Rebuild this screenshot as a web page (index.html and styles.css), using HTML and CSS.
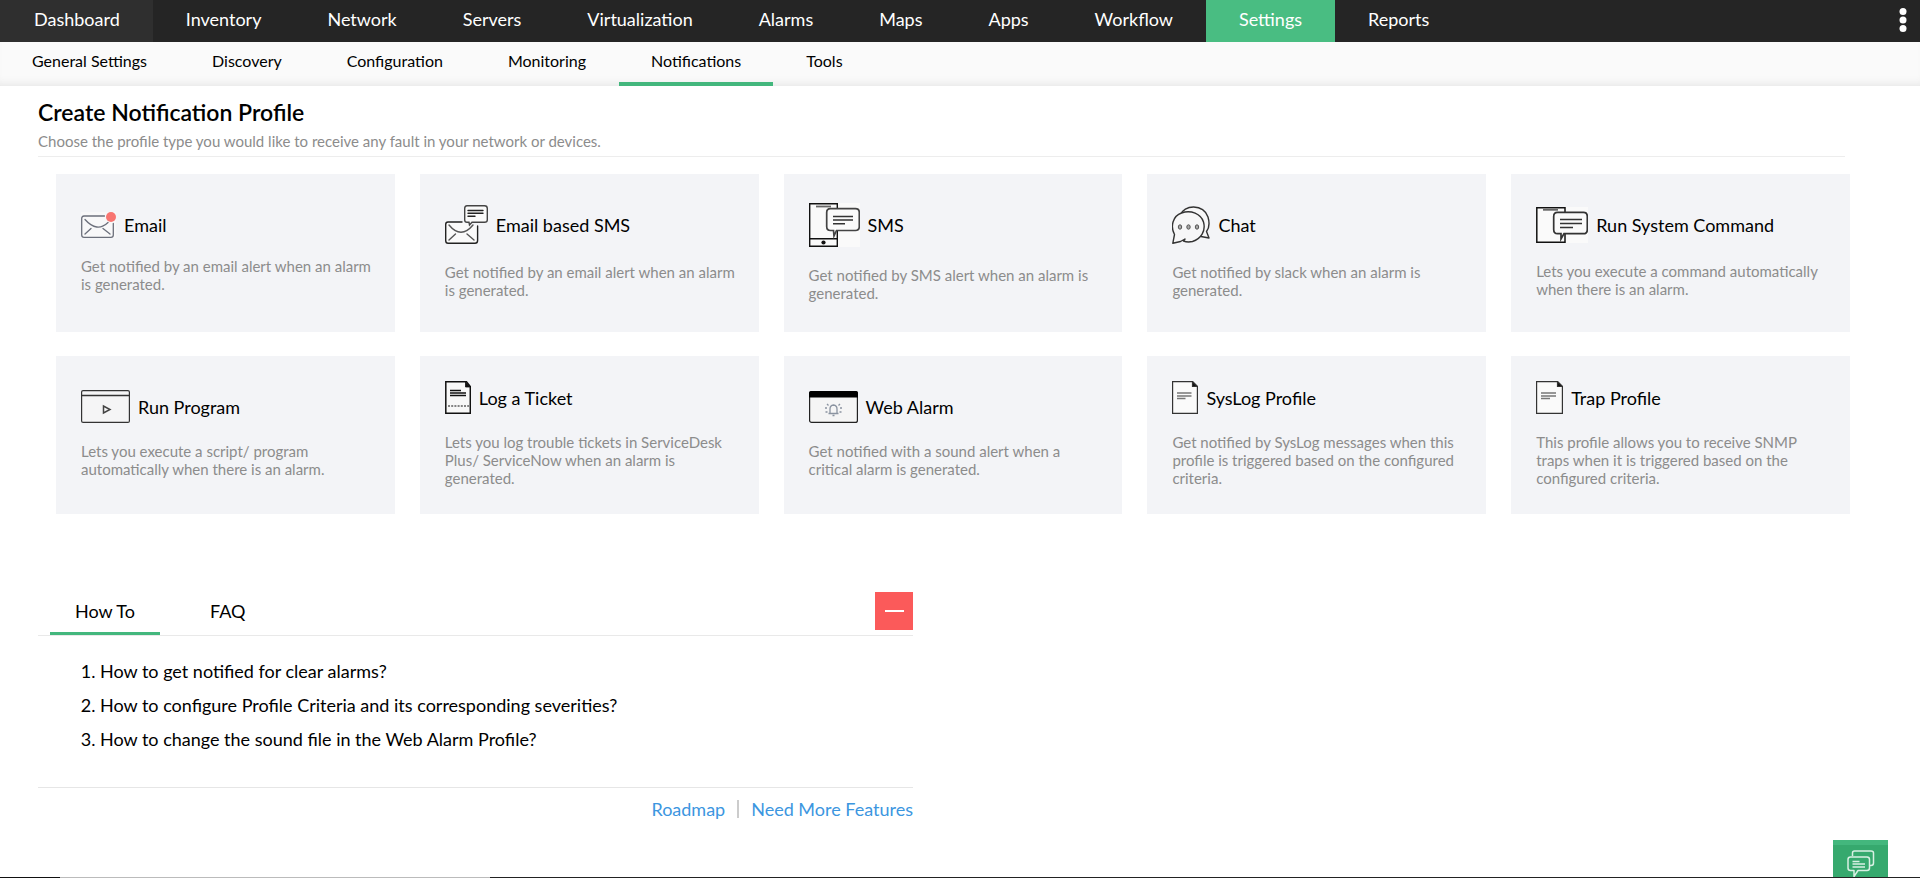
FILE: index.html
```html
<!DOCTYPE html>
<html lang="en">
<head>
<meta charset="utf-8">
<title>Create Notification Profile</title>
<link rel="stylesheet" href="styles.css">
</head>
<body>
<nav class="topnav" aria-label="Main">
  <a class="topnav-item is-home" href="#">Dashboard</a>
  <a class="topnav-item" href="#">Inventory</a>
  <a class="topnav-item" href="#">Network</a>
  <a class="topnav-item" href="#">Servers</a>
  <a class="topnav-item" href="#">Virtualization</a>
  <a class="topnav-item" href="#">Alarms</a>
  <a class="topnav-item" href="#">Maps</a>
  <a class="topnav-item" href="#">Apps</a>
  <a class="topnav-item" href="#">Workflow</a>
  <a class="topnav-item is-active" href="#">Settings</a>
  <a class="topnav-item" href="#">Reports</a>
  <button class="more" type="button" aria-label="More">
    <svg width="8" height="26" viewBox="0 0 8 26" fill="#fff"><circle cx="4" cy="4.500" r="3.500"/><circle cx="4" cy="13" r="3.500"/><circle cx="4" cy="21.500" r="3.500"/></svg>
  </button>
</nav>
<nav class="subnav" aria-label="Settings">
  <a class="subnav-item" href="#">General Settings</a>
  <a class="subnav-item" href="#">Discovery</a>
  <a class="subnav-item" href="#">Configuration</a>
  <a class="subnav-item" href="#">Monitoring</a>
  <a class="subnav-item is-active" href="#">Notifications</a>
  <a class="subnav-item" href="#">Tools</a>
</nav>

<main class="page">
  <header class="page-head">
    <h1 class="page-title">Create Notification Profile</h1>
    <p class="page-note">Choose the profile type you would like to receive any fault in your network or devices.</p>
  </header>

  <section class="cards">
    <a class="card" href="#">
      <span class="card-head">
        <svg width="35" height="26" viewBox="0 0 35 26" fill="none" stroke="#6b6f7b" stroke-width="1.300" stroke-linecap="round"><path d="M0 0H35V26H0Z" fill="#f8f8f9" stroke="none"/><path d="M23.500 4H3Q.7 4 .7 6.500V23Q.7 25.300 3 25.300H30Q32.300 25.300 32.300 23V11.500M4 7.500Q16 21 27 10.500M4 22L10 16.500M29 22L22 16.500"/><circle cx="30" cy="5" r="5" fill="#f87571" stroke="none"/></svg>
        <span class="card-title">Email</span>
      </span>
      <span class="card-text">Get notified by an email alert when an alarm is generated.</span>
    </a>
    <a class="card" href="#">
      <span class="card-head">
        <svg width="43" height="39" viewBox="0 0 43 39" fill="none" stroke="#222" stroke-width="1.400" stroke-linecap="round"><path d="M17 17H3Q.7 17 .7 19.500V35.500Q.7 38.300 3 38.300H30Q32.600 38.300 32.600 35.500V21" fill="#fafafa"/><path d="M4 20Q16 34.500 28 20M4 35L10.500 29M29 35L22 29" stroke="#555"/><path d="M22 .8H39.500Q42.300.8 42.300 3.500V15Q42.300 17.300 39.500 17.300H27L24.500 20 24 17.300H22Q19.700 17.300 19.700 15V3.500Q19.700.8 22 .8Z" fill="#fafafa" stroke="#444"/><path d="M23 5.500H38M23 8.300H38M23 11.200H30"/></svg>
        <span class="card-title">Email based SMS</span>
      </span>
      <span class="card-text">Get notified by an email alert when an alarm is generated.</span>
    </a>
    <a class="card" href="#">
      <span class="card-head">
        <svg width="51" height="44" viewBox="0 0 51 44" fill="none" stroke="#111" stroke-width="1.400"><path d="M0 0H51V44H0Z" fill="#fafafa" stroke="none"/><path d="M.7.7H28.300V43.300H.7ZM.7 35.700H28.300"/><path d="M7 3.500H22" stroke="#666" stroke-width="1.800"/><circle cx="14.500" cy="39.500" r="2.100" fill="#111" stroke="none"/><path d="M21.500 5.700H46.500Q50.300 5.700 50.300 9.500V23.500Q50.300 27.500 46.500 27.500H27.500L25 33 24.500 27.500H21.500Q17.700 27.500 17.700 23.500V9.500Q17.700 5.700 21.500 5.700Z" fill="#fafafa" stroke="#444" stroke-width="1.700"/><path d="M24 13.500H44M24 17H44M24 20.800H36" stroke="#333"/></svg>
        <span class="card-title">SMS</span>
      </span>
      <span class="card-text">Get notified by SMS alert when an alarm is generated.</span>
    </a>
    <a class="card" href="#">
      <span class="card-head">
        <svg width="38" height="38" viewBox="0 0 38 38" fill="#f7f7f8" stroke="#333" stroke-width="1.400" stroke-linejoin="round"><path d="M8 9.500C12 -1.500 31-2.500 36 11 38 18 36.500 23 34.500 25.500L37 32 29 30.500Z"/><path d="M2.500 28.500C-2 20 1 10 9.500 7 19 3.500 29 8 31.500 16 34 25 29 33 20.500 35.500 17 36.300 14 36 11.500 35L13 33 8.500 35.500.8 37.300Z"/><g fill="#aaa" stroke="#555" stroke-width="1"><ellipse cx="8" cy="21" rx="1.700" ry="2.200"/><ellipse cx="16.500" cy="21" rx="1.700" ry="2.200"/><ellipse cx="25" cy="21" rx="1.700" ry="2.200"/></g></svg>
        <span class="card-title">Chat</span>
      </span>
      <span class="card-text">Get notified by slack when an alarm is generated.</span>
    </a>
    <a class="card" href="#">
      <span class="card-head">
        <svg width="52" height="36" viewBox="0 0 52 36" fill="none" stroke="#111" stroke-width="1.500"><path d="M0 0H52V36H0Z" fill="#fafafa" stroke="none"/><path d="M.8.8H29V35.200H.8Z"/><path d="M7 2.800H22" stroke="#666" stroke-width="1.800"/><path d="M21.500 5.300H47.500Q51.300 5.300 51.300 9.500V22.500Q51.300 26.700 47.500 26.700H28L25 32 25 26.700H21.500Q17.700 26.700 17.700 22.500V9.500Q17.700 5.300 21.500 5.300Z" fill="#fafafa" stroke="#333" stroke-width="1.700"/><path d="M24 12.500H46M24 16.500H46M24 20.500H37" stroke="#333"/></svg>
        <span class="card-title">Run System Command</span>
      </span>
      <span class="card-text">Lets you execute a command automatically when there is an alarm.</span>
    </a>
    <a class="card" href="#">
      <span class="card-head">
        <svg width="49" height="33" viewBox="0 0 49 33" fill="#f5f5f6" stroke="#333" stroke-width="1.200"><rect x=".6" y=".6" width="47.800" height="31.800" rx="1.500"/><path d="M.6 5.500H48.400" stroke-width="1.500"/><path d="M22.500 16V23L29 19.500Z" stroke="#444" stroke-width="1.500"/></svg>
        <span class="card-title">Run Program</span>
      </span>
      <span class="card-text">Lets you execute a script/ program automatically when there is an alarm.</span>
    </a>
    <a class="card" href="#">
      <span class="card-head">
        <svg width="26" height="33" viewBox="0 0 26 33" fill="#f8f8f8" stroke="#111" stroke-width="1.500"><path d="M.8.8H21.500L25.300 5.500V32.200H.8Z"/><path d="M20.500.8V6H25.300Z" fill="#111" stroke-width=".8"/><path d="M5 9.500H16M5 12H21M5 14.500H21" stroke-width="1.400"/><path d="M3 25H24" stroke-dasharray="2 1.200" stroke-width="1.200"/></svg>
        <span class="card-title">Log a Ticket</span>
      </span>
      <span class="card-text">Lets you log trouble tickets in ServiceDesk Plus/ ServiceNow when an alarm is generated.</span>
    </a>
    <a class="card" href="#">
      <span class="card-head">
        <svg width="49" height="32" viewBox="0 0 49 32" fill="#f5f5f5" stroke="#222" stroke-width="1.200"><rect x=".6" y=".6" width="47.800" height="30.800" rx="2"/><path d="M0 6.500V2Q0 0 2 0H47Q49 0 49 2V6.500Z" fill="#000" stroke="none"/><path d="M19.500 22.500H29.500M21 22V18Q21 14.500 24.500 14 28 14.500 28 18V22M23.500 24.500H25.500M18 13L19.500 14.500M31 13L29.500 14.500M16 17H18M16.500 21H18.500M31 17H33M30.500 21H32.500" stroke="#8a93a0" stroke-width="1.300"/></svg>
        <span class="card-title">Web Alarm</span>
      </span>
      <span class="card-text">Get notified with a sound alert when a critical alarm is generated.</span>
    </a>
    <a class="card" href="#">
      <span class="card-head">
        <svg width="26" height="33" viewBox="0 0 26 33" fill="#fafafa" stroke="#333" stroke-width="1.200"><path d="M.6.6H20.500L25.400 5.500V32.400H.6Z"/><path d="M20.500.6V5.500H25.400Z" fill="#111"/><path d="M5 12H19.500M5 15H19.500M5 17.500H13.500" stroke="#777" stroke-width="1.300"/></svg>
        <span class="card-title">SysLog Profile</span>
      </span>
      <span class="card-text">Get notified by SysLog messages when this profile is triggered based on the configured criteria.</span>
    </a>
    <a class="card" href="#">
      <span class="card-head">
        <svg width="27" height="33" viewBox="0 0 27 33" fill="#fafafa" stroke="#333" stroke-width="1.200"><path d="M.6.6H21.500L26.400 5.500V32.400H.6Z"/><path d="M21.500.6V5.500H26.400Z" fill="#111"/><path d="M5 12H20M5 15H20M5 17.500H14" stroke="#777" stroke-width="1.300"/></svg>
        <span class="card-title">Trap Profile</span>
      </span>
      <span class="card-text">This profile allows you to receive SNMP traps when it is triggered based on the configured criteria.</span>
    </a>
  </section>

  <section class="help">
    <div class="help-bar">
      <button class="tab is-active" type="button">How To</button>
      <button class="tab" type="button">FAQ</button>
      <button class="collapse" type="button" aria-label="Collapse"><span class="minus"></span></button>
    </div>
    <ol class="help-list">
      <li>How to get notified for clear alarms?</li>
      <li>How to configure Profile Criteria and its corresponding severities?</li>
      <li>How to change the sound file in the Web Alarm Profile?</li>
    </ol>
    <footer class="help-foot">
      <a class="foot-link" href="#">Roadmap</a>
      <a class="foot-link" href="#">Need More Features</a>
    </footer>
  </section>
</main>

<button class="chat" type="button" aria-label="Chat">
  <svg width="28" height="28" viewBox="0 0 28 28" fill="none" stroke="#d9f0e4" stroke-width="1.500" stroke-linejoin="round"><path d="M5.500 6V3Q5.500 1 7.500 1H24Q26.500 1 26.500 3V13Q26.500 15.500 24 15.500H23"/><path d="M3.500 7H20Q22.500 7 22.500 9.500V18Q22.500 20.500 20 20.500H11L7 26.500V20.500H3.500Q1 20.500 1 18V9.500Q1 7 3.500 7Z"/><path d="M5.500 11.500H12.500M5.500 14H18M5.500 17H18"/></svg>
</button>
<div class="edge"></div>
</body>
</html>
```
FILE: styles.css
```css
* { box-sizing: border-box; }
body {
  margin: 0;
  min-height: 100vh;
  background: #fff;
  color: #000;
  font-family: Lato, "Open Sans", sans-serif;
  font-size: 18px;
}
a { color: inherit; text-decoration: none; }
button { border: 0; padding: 0; background: none; font: inherit; color: inherit; cursor: pointer; }
svg { display: block; flex: none; }

.topnav { display: flex; height: 42px; background: #252525; color: #fff; }
.topnav-item { padding: 0 33px; line-height: 38px; }
.topnav-item.is-home { padding-left: 34px; background: #2f2f2f; }
.topnav-item.is-active { background: #49bd82; }
.more { margin-left: auto; padding: 0 13px 2px; }

.subnav {
  display: flex;
  gap: 1px;
  height: 44px;
  background: #fafafa;
  box-shadow: inset 0 -8px 8px -6px #e6e6e6;
  font-size: 16px;
}
.subnav-item { padding: 0 32px; line-height: 38px; }
.subnav-item.is-active { border-bottom: 4px solid #43b77d; }

.page { padding: 11px 70px 0 38px; }
.page-head { margin-right: 5px; border-bottom: 1px solid #ededed; }
.page-title { margin: 0; font-size: 23px; line-height: 30px; font-weight: 600; }
.page-note { margin: 0; padding: 4px 0 5px; font-size: 15px; line-height: 20px; color: #8c8c8c; }

.cards {
  display: grid;
  grid-template-columns: repeat(5, minmax(0, 1fr));
  gap: 24px 25px;
  padding: 17px 0 0 18px;
}
.card {
  display: flex;
  flex-direction: column;
  justify-content: center;
  gap: 19px;
  min-height: 158px;
  padding: 0 20px 2px 25px;
  background: #f3f4f7;
}
.card-head { display: flex; align-items: center; gap: 8px; }
.card-title { line-height: 22px; }
.card-text { font-size: 15px; line-height: 18px; color: #8c8c8c; }

.help { max-width: 875px; margin-top: 78px; }
.help-bar {
  display: flex;
  align-items: flex-start;
  gap: 25px;
  padding-left: 12px;
  border-bottom: 1px solid #e9e9e9;
}
.tab { height: 43px; padding: 0 25px 2px; border-bottom: 3px solid transparent; }
.tab.is-active { border-bottom-color: #43b77d; }
.collapse {
  display: flex;
  align-items: center;
  justify-content: center;
  width: 38px;
  height: 38px;
  margin-left: auto;
  background: #fb5a5a;
}
.minus { width: 19px; height: 2px; background: #fff; }
.help-list { margin: 0; padding: 18px 0 31px 62px; border-bottom: 1px solid #e6e6e6; }
.help-list li { line-height: 34px; }
.help-foot { display: flex; justify-content: flex-end; padding-top: 12px; color: #3c96df; }
.foot-link { line-height: 18px; }
.foot-link + .foot-link { margin-left: 12px; padding-left: 12px; border-left: 2px solid #ccc; }

.chat {
  position: fixed;
  right: 32px;
  bottom: 1px;
  display: flex;
  justify-content: center;
  width: 55px;
  height: 37px;
  padding-top: 9px;
  overflow: hidden;
  border-top: 5px solid #43b77d;
  background: #36a96e;
}
.chat svg { margin-top: -4px; }
.edge {
  position: fixed;
  left: 0;
  right: 0;
  bottom: 0;
  height: 1px;
  background: linear-gradient(90deg, #111 60px, #bbb 60px, #bbb 490px, #222 490px);
}
```
